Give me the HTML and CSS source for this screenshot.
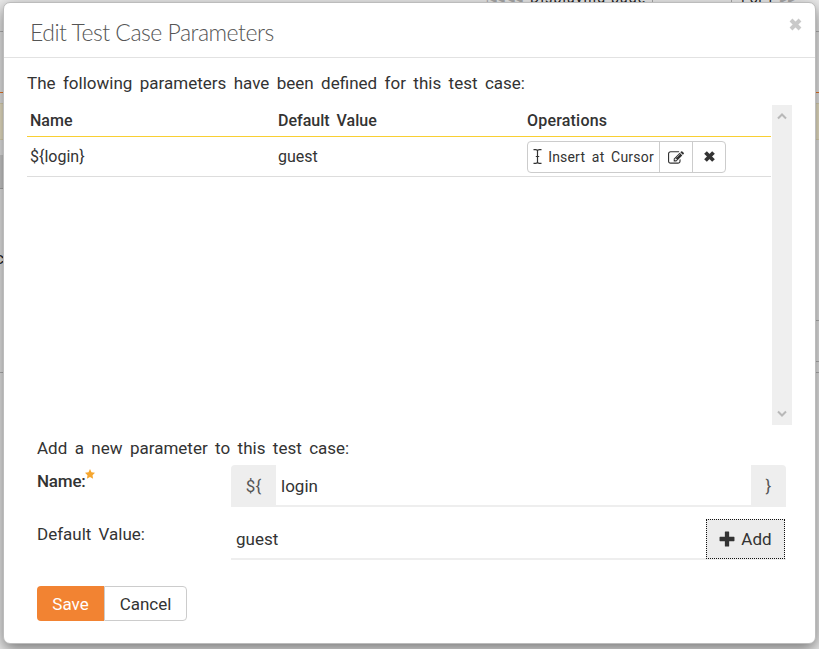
FILE: index.html
```html
<!DOCTYPE html>
<html lang="en">
<head>
<meta charset="utf-8">
<title>Edit Test Case Parameters</title>
<link rel="stylesheet" href="styles.css">
</head>
<body>
<div class="backdrop">
  <div class="pager"><span class="pager-dim">I◀◀ ◀◀</span><span class="pager-label">Displaying page</span><span class="pager-box"></span><span class="pager-count">1 of 1</span><span class="pager-dim">▶▶</span></div>
  <i class="rule rule-top"></i><i class="rule rule-orange"></i><i class="band"></i>
  <i class="shade"></i><i class="rule rule-left"></i><i class="rule rule-r1"></i><i class="rule rule-r2"></i><i class="rule rule-r3"></i>
  <span class="peek">c</span>
</div>
<div class="modal">
  <header class="modal-header">
    <h1><span class="t-title">Edit Test Case Parameters</span></h1>
    <button class="close" aria-label="Close"><svg width="13" height="13" viewBox="0 0 13 13"><path d="M2 2l9 9M11 2l-9 9"/></svg></button>
  </header>
  <p class="intro"><span class="t-intro">The following parameters have been defined for this test case:</span></p>
  <div class="scroller">
    <table>
      <thead><tr><th><span class="t-name">Name</span></th><th><span class="t-default">Default Value</span></th><th><span class="t-ops">Operations</span></th></tr></thead>
      <tbody><tr><td><span class="t-token">${login}</span></td><td><span class="t-guest">guest</span></td><td>
        <div class="group">
          <button class="insert"><svg class="ibeam" width="9" height="15" viewBox="0 0 9 15"><path d="M.5.7h2.2c1 0 1.800.5 1.800 1.300C4.500 1.200 5.300.7 6.300.7h2.200M4.500 2v11M.5 14.300h2.200c1 0 1.800-.5 1.800-1.300c0 .8.800 1.300 1.800 1.300h2.200M2.800 7.500h3.400"/></svg><span class="t-insert">Insert at Cursor</span></button>
          <button class="square"><svg width="16" height="14" viewBox="0 0 1792 1568"><path d="M888 1184l116-116-152-152-116 116v56h96v96h56zM1328 464q-16-16-33 1l-350 350q-17 17-1 33t33-1l350-350q17-17 1-33zM1408 1058v190q0 119-84.500 203.500t-203.500 84.500h-832q-119 0-203.500-84.500t-84.500-203.500v-832q0-119 84.500-203.500t203.500-84.500h832q63 0 117 25 15 7 18 23 3 17-9 29l-49 49q-14 14-32 8-23-6-45-6h-832q-66 0-113 47t-47 113v832q0 66 47 113t113 47h832q66 0 113-47t47-113v-126q0-13 9-22l64-64q15-15 35-7t20 29zM1312 320l288 288-672 672h-288v-288zM1756 452l-92 92-288-288 92-92q28-28 68-28t68 28l152 152q28 28 28 68t-28 68z"/></svg></button>
          <button class="square"><svg class="cross" width="13" height="13" viewBox="0 0 13 13"><path d="M2.500 2.500l8 8M10.500 2.500l-8 8"/></svg></button>
        </div></td></tr></tbody>
    </table>
    <div class="scrollbar"><svg width="10" height="7" viewBox="0 0 10 7"><path d="M1 5.500L5 1.500l4 4"/></svg><svg width="10" height="7" viewBox="0 0 10 7"><path d="M1 1.500l4 4 4-4"/></svg></div>
  </div>
  <form class="form">
    <p class="form-title"><span class="t-add-new">Add a new parameter to this test case:</span></p>
    <div class="row">
      <label class="required"><span class="t-label">Name:</span><svg width="10" height="10" viewBox="0 0 10 10"><path d="M5 0l1.500 3.200 3.500.5-2.500 2.500.6 3.600L5 8.100 1.900 9.800l.6-3.600L0 3.700l3.500-.5z"/></svg></label>
      <div class="field"><span class="addon pre"><span class="t-pre">${</span></span><span class="value"><span class="t-login">login</span></span><span class="addon post">}</span></div>
    </div>
    <div class="row second">
      <label><span class="t-deflabel">Default Value:</span></label>
      <div class="field"><span class="value"><span class="t-value">guest</span></span><button type="button" class="add"><svg width="16" height="16" viewBox="0 0 15 15"><path d="M6 .5h3q.5 0 .5.500V5.500H14q.5 0 .5.500v3q0 .5-.5.500H9.500V14q0 .5-.5.500H6q-.5 0-.5-.5V9.500H1Q.5 9.500.5 9V6q0-.5.5-.5h4.500V1q0-.5.500-.5z"/></svg><span class="t-add">Add</span></button></div>
    </div>
    <div class="actions"><button type="button" class="save"><span class="t-save">Save</span></button><button type="button" class="cancel"><span class="t-cancel">Cancel</span></button></div>
  </form>
</div>
</body>
</html>
```

FILE: styles.css
```css
* { box-sizing: border-box; }
html, body { margin: 0; height: 100%; overflow: hidden; }
body {
  padding: 2px 3px 5px;
  background: #ebebeb;
  color: #333;
  font: 17px/24px Roboto, "Noto Sans", sans-serif;
}
h1, p { margin: 0; font-weight: 400; }
button { padding: 0; margin: 0; border: 0; background: none; color: inherit; font: inherit; display: flex; align-items: center; justify-content: center; }
svg { display: block; flex: none; }
span { white-space: nowrap; }

.backdrop { position: absolute; inset: 0; overflow: hidden; }
.pager { position: absolute; left: 486px; top: -9px; height: 15px; display: flex; gap: 6px; color: #222; font: 14px/15px Roboto, sans-serif; }
.pager-label { letter-spacing: 1.2px; }
.pager-dim { color: #aaa; font-size: 10px; width: 38px; }
.pager-box { width: 80px; border: solid #aaa; border-width: 0 1px; }
.rule { position: absolute; left: 0; right: 0; height: 1px; background: #b5b5b5; }
.rule-top { top: 31px; }
.rule-orange { top: 92px; background: #f17a28; }
.band { position: absolute; left: 0; right: 0; top: 103px; height: 37px; background: #f0e8cc; border: solid #e2d9b7; border-width: 1px 0; }
.shade { position: absolute; left: 0; width: 10px; top: 155px; height: 34px; background: #cfcfcf; border-bottom: 1px solid #aaa; }
.rule-left { top: 372px; right: auto; width: 10px; }
.rule-r1, .rule-r2, .rule-r3 { left: 810px; }
.rule-r1 { top: 320px; }
.rule-r2 { top: 361px; }
.rule-r3 { top: 372px; }
.peek { position: absolute; left: -5px; top: 246px; color: #222; }

.modal {
  position: relative;
  height: 642px;
  background: #fff;
  border: 1px solid #bcbcbc;
  border-radius: 7px;
  box-shadow: 0 5px 15px rgba(0, 0, 0, .5);
}
.modal-header { display: flex; justify-content: space-between; height: 55px; padding: 15px 13px 0 26px; border-bottom: 1px solid #e2e2e2; }
h1 { font: 300 23px/28px Lato, sans-serif; letter-spacing: -.5px; color: #555; }
.close { align-self: flex-start; }
.close path, .cross path { fill: none; stroke: #c9c9c9; stroke-width: 4; }
.cross path { stroke: #333; stroke-width: 3.800; }
.intro { padding: 13px 0 0 23px; height: 47px; }
.scroller { display: flex; justify-content: space-between; width: 765px; height: 320px; margin-left: 23px; }
table { width: 744px; height: 72px; table-layout: fixed; border-collapse: separate; border-spacing: 0; font-size: 16px; }
th, td { padding: 0 0 0 3px; text-align: left; }
th:last-child, td:last-child { padding-left: 4px; }
th { height: 32px; font-weight: 500; border-bottom: 1px solid #f9cf33; }
td { height: 40px; border-bottom: 1px solid #ddd; }
.group { display: flex; width: 199px; height: 32px; border: 1px solid #ccc; border-radius: 4px; font-size: 14px; }
.insert { width: 131px; gap: 6px; }
.ibeam path { fill: none; stroke: #333; stroke-width: 1.200; }
.square { width: 33px; border-left: 1px solid #ccc; fill: #333; }
.scrollbar { width: 20px; background: #efefef; display: flex; flex-direction: column; justify-content: space-between; align-items: center; padding: 8px 0; }
.scrollbar path { fill: none; stroke: #b8b8b8; stroke-width: 2; }

.form { padding: 11px 29px 0 33px; }
.form-title { height: 29px; }
.row { display: grid; grid-template-columns: 194px 555px; height: 42px; }
.row label { padding-top: 4px; }
.required { display: flex; font-weight: 500; }
.required svg { fill: #f5a62f; margin-left: -1px; }
.field { display: flex; height: 42px; border-bottom: 2px solid #eee; }
.value { flex: 1; padding: 9px 5px; }
.addon { height: 42px; background: #eee; color: #555; padding-top: 9px; text-align: center; }
.pre { width: 45px; border-radius: 4px 0 0; }
.post { width: 35px; border-radius: 0 4px 0 0; }
.second { margin-top: 11px; }
.add { width: 79px; height: 40px; margin: 1px 1px 0 0; gap: 6px; background: #ececec; border: 1px dotted #111; fill: #333; }
.actions { display: flex; margin-top: 26px; }
.save { width: 67px; height: 35px; background: #f28332; color: #fff; border-radius: 4px 0 0 4px; }
.cancel { width: 83px; height: 35px; border: 1px solid #ccc; border-radius: 0 4px 4px 0; }

.t-intro, .t-add-new { word-spacing: 3.200px; }
.t-default, .t-insert, .t-deflabel { word-spacing: 3px; }
.t-insert, .t-ops { letter-spacing: .2px; }
.t-label { letter-spacing: -.2px; }
```
